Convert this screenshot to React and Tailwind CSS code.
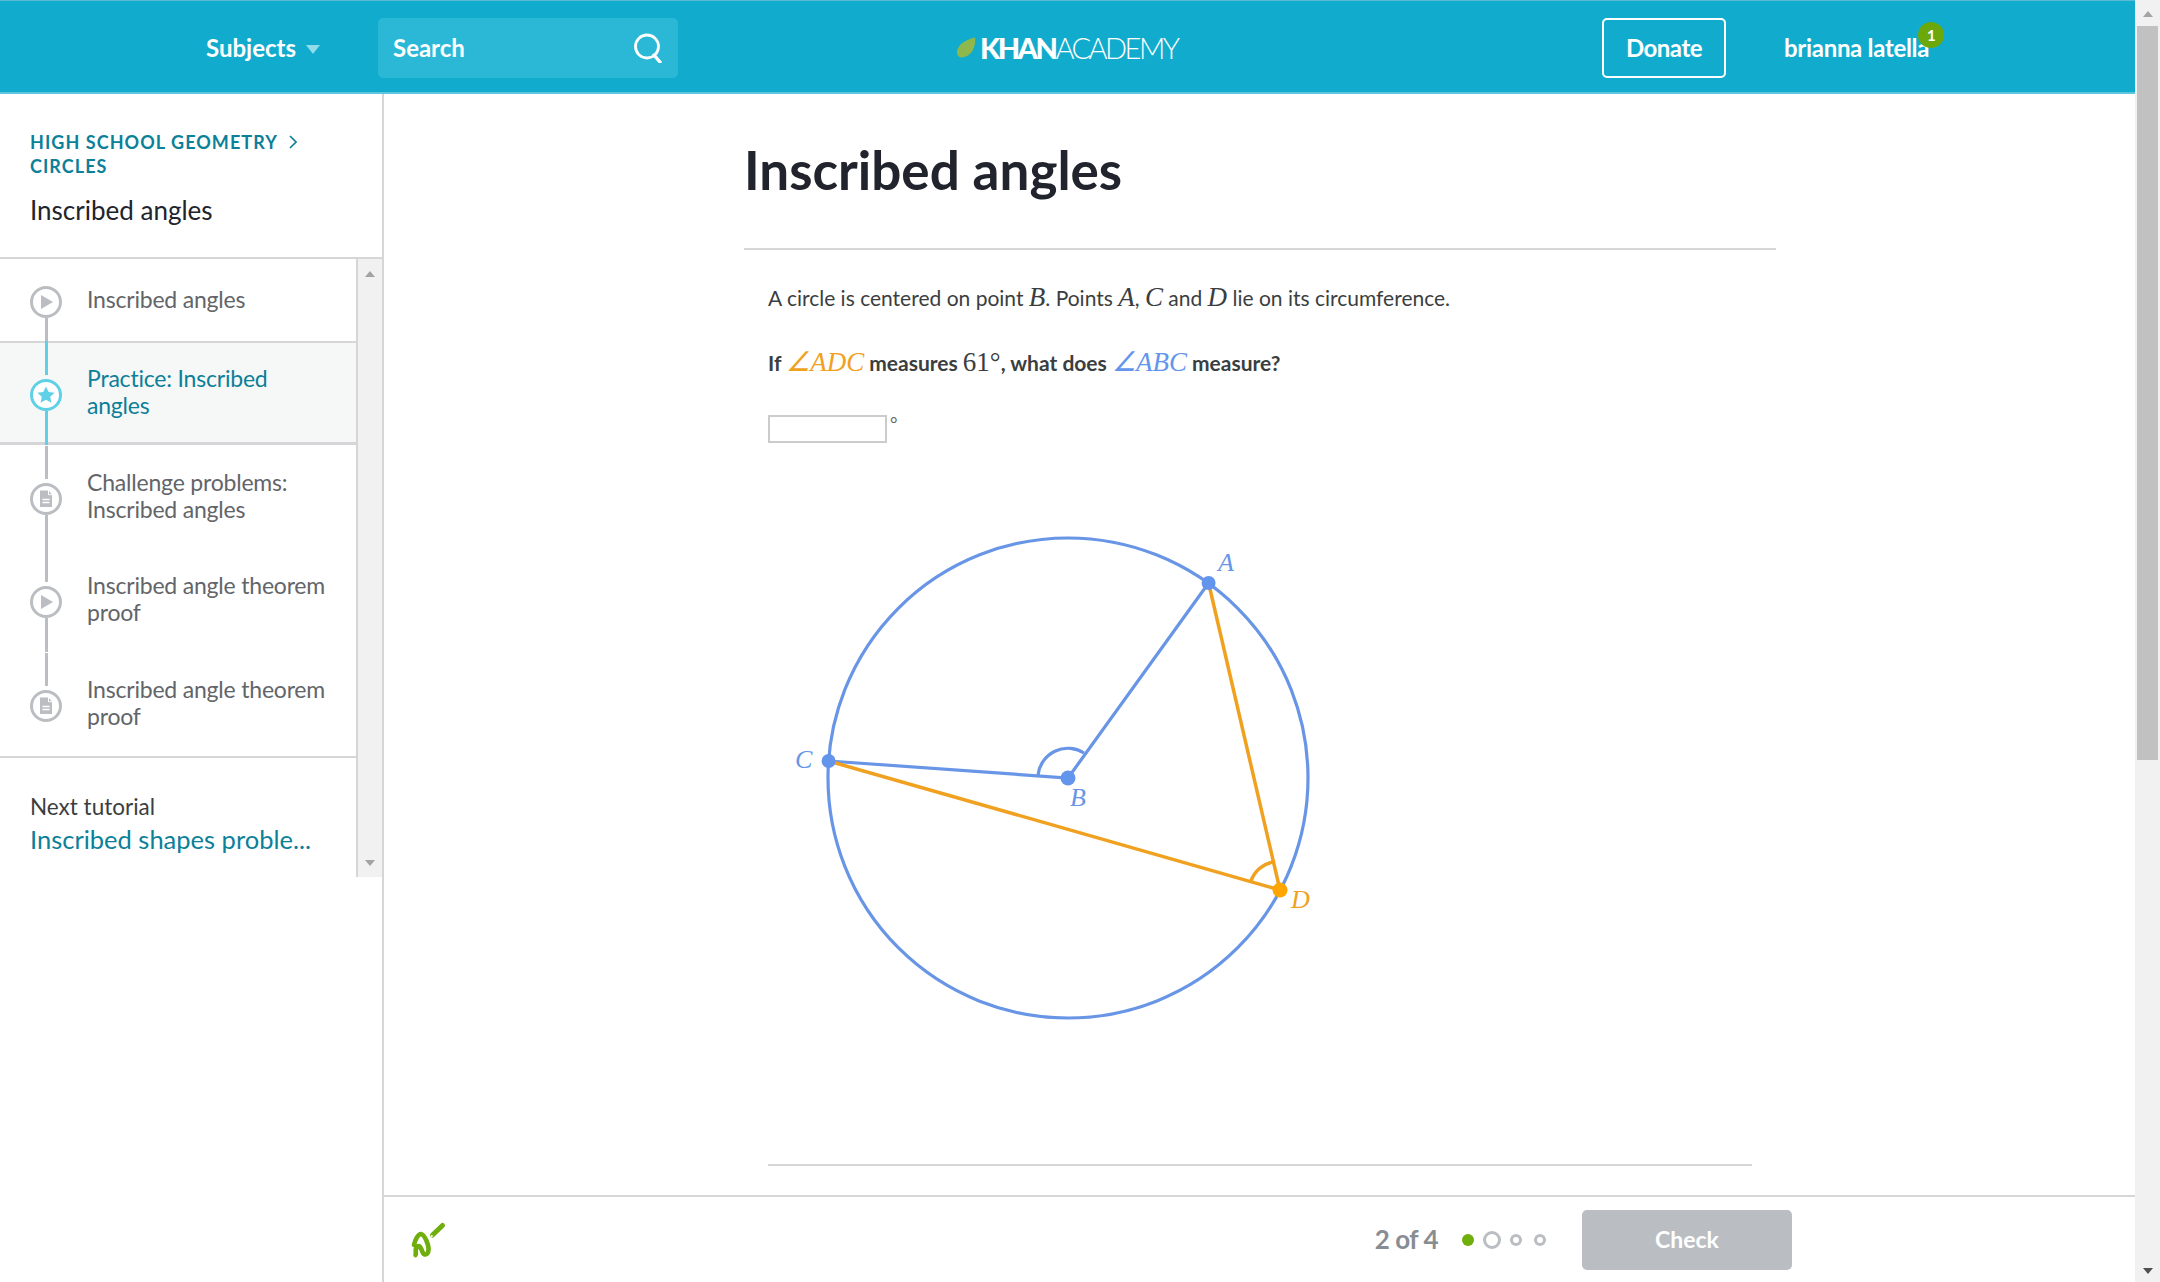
import React from 'react';

const sidebarItems = [
  { kind: 'play', lines: ['Inscribed angles'], row: 'h-[84px] border-b-2', below: 'h-[23px] bg-[#babec2]' },
  { kind: 'star', lines: ['Practice: Inscribed', 'angles'], row: 'h-[102px] border-b-[3px] bg-[#f6f7f7]', active: true, above: 'h-[34px] bg-[#5fd0e5]', below: 'h-[34px] bg-[#5fd0e5]' },
  { kind: 'doc', lines: ['Challenge problems:', 'Inscribed angles'], row: 'h-[103px]', above: 'h-[33px] bg-[#babec2]', below: 'h-[34px] bg-[#babec2]' },
  { kind: 'play', lines: ['Inscribed angle theorem', 'proof'], row: 'h-[104px]', above: 'h-[34px] bg-[#babec2]', below: 'h-[34px] bg-[#babec2]' },
  { kind: 'doc', lines: ['Inscribed angle theorem', 'proof'], row: 'h-[106px] border-b-2', above: 'h-[33px] bg-[#babec2]' },
];

const M = ({ children, className = '' }) => (
  <span className={`font-['Liberation_Serif',serif] italic text-[27px] font-normal leading-none ${className}`}>{children}</span>
);

const ItemIcon = ({ kind, active }) => {
  const color = active ? '#5fd0e5' : '#babec2';
  return (
    <svg viewBox="0 0 32 32" className="w-8 h-8 block">
      <circle cx="16" cy="16" r="14.5" fill="white" stroke={color} strokeWidth="3" />
      {kind === 'play' && <path d="M11 9 L23 16 L11 23 Z" fill={color} />}
      {kind === 'star' && <path d="M16 7.5 L18.7 13 L24.6 13.7 L20.2 17.8 L21.4 23.8 L16 20.8 L10.6 23.8 L11.8 17.8 L7.4 13.7 L13.3 13 Z" fill={color} />}
      {kind === 'doc' && (
        <>
          <path d="M10 7.5 H18.5 L22 11.5 V24 H10 Z" fill={color} />
          <path d="M18.5 7 V11.7 H22.5" fill="none" stroke="white" strokeWidth="1" />
          <path d="M12.5 16.5 H19.5 M12.5 19.5 H19.5" stroke="white" strokeWidth="1.4" />
        </>
      )}
    </svg>
  );
};

const SidebarItem = ({ item }) => (
  <div className={`flex items-center pl-[30px] border-[#d6d6d8] ${item.row}`}>
    <div className="relative mt-1 w-8 h-8 shrink-0">
      {item.above && <div className={`absolute left-[14.5px] w-[3px] bottom-[36px] ${item.above}`} />}
      {item.below && <div className={`absolute left-[14.5px] w-[3px] top-8 ${item.below}`} />}
      <ItemIcon kind={item.kind} active={item.active} />
    </div>
    <div className={`ml-[25px] mb-[2px] text-[23px] leading-[27px] tracking-[-0.2px] ${item.active ? 'text-[#0c7f99]' : 'text-[#626569]'}`}>
      {item.lines.map((line) => <div key={line}>{line}</div>)}
    </div>
  </div>
);

const Diagram = () => (
  <svg viewBox="0 0 560 520" className="w-[560px] h-[520px] block">
    <circle cx="300" cy="267" r="240" fill="none" stroke="#6895e5" strokeWidth="3.2" />
    <path d="M60.6 250 L300 267 L440.6 72" fill="none" stroke="#6895e5" strokeWidth="3.2" />
    <path d="M270 264 A30 30 0 0 1 316 242" fill="none" stroke="#6895e5" strokeWidth="3.2" />
    <path d="M60.6 250 L512 379 L440.6 72" fill="none" stroke="#f0a11f" strokeWidth="3.5" />
    <path d="M483 370 A29 29 0 0 1 505 351" fill="none" stroke="#f0a11f" strokeWidth="3.5" />
    <circle cx="440.6" cy="72" r="7" fill="#6495ed" />
    <circle cx="300" cy="267" r="7.5" fill="#6495ed" />
    <circle cx="60.6" cy="250" r="7" fill="#6495ed" />
    <circle cx="512" cy="379" r="7.5" fill="#ffa500" />
    <g className="font-['Liberation_Serif',serif] italic text-[26px]" fill="#6895e5">
      <text x="450" y="60">A</text>
      <text x="302" y="295">B</text>
      <text x="27" y="257">C</text>
      <text x="523" y="397" fill="#f0a11f">D</text>
    </g>
  </svg>
);

const Scribble = () => (
  <svg viewBox="0 0 50 50" className="w-[50px] h-[50px] block">
    <path d="M10 30 C11 25 14 19 17 19 C20.5 19.5 25 30 24.5 35 C24 40 20 41 18.5 37 C17 33 15.5 29.5 13 32 C10 35 13 39 11.5 40" fill="none" stroke="#6fae0c" strokeWidth="4.6" strokeLinecap="round" strokeLinejoin="round" />
    <path d="M28.5 20 L38.5 10.5" stroke="#6fae0c" strokeWidth="5" strokeLinecap="round" />
    <circle cx="27.8" cy="21" r="1" fill="white" />
  </svg>
);

const ScrollArrow = ({ up, className = '' }) => (
  <svg viewBox="0 0 12 8" className={`w-3 h-2 ${className}`}>
    <path d={up ? 'M6 1 L11 7 H1 Z' : 'M1 1 H11 L6 7 Z'} fill="currentColor" />
  </svg>
);

export default function App() {
  return (
    <div className="flex w-[2160px] h-[1282px] overflow-hidden bg-white font-['Lato',sans-serif] text-[#21242c]">
      <div className="flex flex-col flex-1 min-w-0">
        <header className="flex items-center shrink-0 h-[94px] pt-[3px] bg-[#11accd] border-t border-t-[#5cb9d2] border-b-2 border-b-[#5dc6de] text-white text-[24px] font-bold">
          <div className="flex items-center ml-[206px] w-[172px]">
            <span>Subjects</span>
            <svg viewBox="0 0 14 9" className="w-[14px] h-[9px] ml-[10px] mt-[3px]"><path d="M0 0 H14 L7 9 Z" fill="#8fdcec" /></svg>
          </div>
          <div className="flex items-center justify-between w-[300px] h-[60px] rounded-[5px] bg-[#2bb8d6] pl-[15px] pr-[15px]">
            <span>Search</span>
            <svg viewBox="0 0 30 30" className="w-[30px] h-[30px]" fill="none" stroke="white" strokeWidth="2.8">
              <circle cx="14" cy="13.5" r="11.5" />
              <path d="M21 22 L27 29" strokeLinecap="round" strokeWidth="3.4" />
            </svg>
          </div>
          <div className="flex items-center ml-[278px] w-[646px] mb-[2px]">
            <svg viewBox="0 0 22 24" className="w-5 h-[23px]"><path d="M21 1 C22 10 18 22 6 23 C3 23 1 21 1 17 C2 8 12 3 21 1 Z" fill="#8eb84c" /></svg>
            <span className="ml-1 text-[29px] leading-none tracking-[-2.5px] font-black">KHAN<span className="font-light">ACADEMY</span></span>
          </div>
          <div className="flex items-center justify-center w-[124px] h-[60px] rounded-[5px] border-2 border-white tracking-[-0.5px]">Donate</div>
          <div className="relative ml-[58px] tracking-[-0.3px]">
            brianna latella
            <div className="absolute -top-[8px] -right-[15px] flex items-center justify-center w-[26px] h-[26px] rounded-full bg-[#6da80a] text-[15px]">1</div>
          </div>
        </header>

        <div className="flex flex-1 min-h-0">
          <aside className="flex flex-col w-[384px] shrink-0 border-r-2 border-[#d6d6d8]">
            <div className="shrink-0 h-[165px] pl-[30px] pt-[36px] border-b-2 border-[#d6d6d8]">
              <div className="text-[18px] leading-[24px] font-bold tracking-[1.05px] text-[#0c7f99] uppercase">
                <div className="flex items-center">
                  High School Geometry
                  <svg viewBox="0 0 8 14" className="w-2 h-[14px] ml-[11px]" fill="none" stroke="#0c7f99" strokeWidth="1.6"><path d="M1 1 L7 7 L1 13" /></svg>
                </div>
                <div>Circles</div>
              </div>
              <div className="mt-[16px] text-[26px] leading-[32px] text-[#21242c]">Inscribed angles</div>
            </div>
            <div className="flex h-[618px]">
              <div className="flex-1 min-w-0">
                {sidebarItems.map((item, i) => <SidebarItem key={i} item={item} />)}
                <div className="pl-[30px] pt-[33px]">
                  <div className="text-[22.5px] leading-[32px] text-[#3b3e40]">Next tutorial</div>
                  <div className="-mt-[1px] text-[25.5px] leading-[34px] text-[#0c7f99]">Inscribed shapes proble...</div>
                </div>
              </div>
              <div className="flex flex-col items-center justify-between w-[26px] shrink-0 bg-[#f1f1f1] border-l-2 border-[#d6d6d8] pt-[11px] pb-[10px] text-[#a3a3a3]">
                <ScrollArrow up />
                <ScrollArrow />
              </div>
            </div>
          </aside>

          <main className="flex flex-col flex-1 min-w-0">
            <div className="flex-1 min-h-0 overflow-hidden pl-[360px]">
              <h1 className="pt-[44px] pb-[46px] w-[1032px] border-b-2 border-[#d6d6d8] text-[53px] leading-[64px] font-bold text-[#21242c]">Inscribed angles</h1>
              <div className="pl-[24px] w-[1008px] text-[#3b3e40]">
                <p className="mt-[32px] text-[21px] leading-[32px]">
                  A circle is centered on point <M>B</M>. Points <M>A</M>, <M>C</M> and <M>D</M> lie on its circumference.
                </p>
                <p className="mt-[33px] text-[21px] leading-[32px] font-bold">
                  If <M className="text-[#f0a11f]">∠ADC</M> measures <M className="not-italic text-[25px]">61°</M>, what does <M className="text-[#6495ed]">∠ABC</M> measure?
                </p>
                <div className="flex items-start mt-[36px]">
                  <div className="w-[119px] h-[28px] border-2 border-[#cccccc]" />
                  <span className="ml-[3px] text-[18px] leading-[16px] text-[#626569]">°</span>
                </div>
                <div className="mt-[68px]">
                  <Diagram />
                </div>
                <div className="mt-[133px] w-[984px] border-t-2 border-[#d6d6d8]" />
              </div>
            </div>
            <div className="flex items-center shrink-0 h-[87px] border-t-2 border-[#d6d6d8] pl-[20px]">
              <Scribble />
              <div className="ml-auto text-[26px] tracking-[-0.5px] font-bold text-[#888d93]">2 of 4</div>
              <div className="flex items-center ml-[24px]">
                <div className="w-3 h-3 rounded-full bg-[#6fae0c]" />
                <div className="ml-[9px] w-[18px] h-[18px] rounded-full border-[3px] border-[#babec2]" />
                <div className="ml-[9px] w-3 h-3 rounded-full border-[3px] border-[#babec2]" />
                <div className="ml-[12px] w-3 h-3 rounded-full border-[3px] border-[#babec2]" />
              </div>
              <div className="flex items-center justify-center ml-[36px] mr-[343px] w-[210px] h-[60px] rounded-[5px] bg-[#babec2] text-white text-[23px] font-bold">Check</div>
            </div>
          </main>
        </div>
      </div>

      <div className="flex flex-col items-center w-[25px] shrink-0 bg-[#f1f1f1] pb-[7px] text-[#505050]">
        <div className="flex justify-center w-full h-[26px] pt-[10px] text-[#a3a3a3]"><ScrollArrow up /></div>
        <div className="w-[21px] h-[734px] bg-[#c1c1c1]" />
        <div className="flex-1" />
        <ScrollArrow />
      </div>
    </div>
  );
}
